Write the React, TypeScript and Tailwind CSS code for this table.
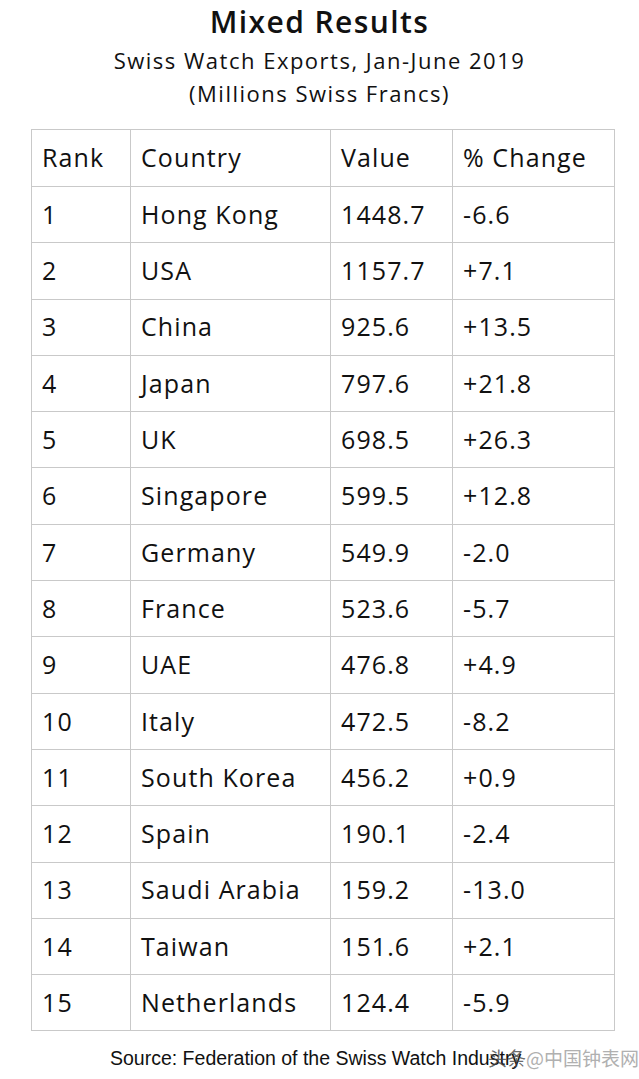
const rows: [number, string, string, string][] = [
  [1, "Hong Kong", "1448.7", "-6.6"],
  [2, "USA", "1157.7", "+7.1"],
  [3, "China", "925.6", "+13.5"],
  [4, "Japan", "797.6", "+21.8"],
  [5, "UK", "698.5", "+26.3"],
  [6, "Singapore", "599.5", "+12.8"],
  [7, "Germany", "549.9", "-2.0"],
  [8, "France", "523.6", "-5.7"],
  [9, "UAE", "476.8", "+4.9"],
  [10, "Italy", "472.5", "-8.2"],
  [11, "South Korea", "456.2", "+0.9"],
  [12, "Spain", "190.1", "-2.4"],
  [13, "Saudi Arabia", "159.2", "-13.0"],
  [14, "Taiwan", "151.6", "+2.1"],
  [15, "Netherlands", "124.4", "-5.9"],
];

export default function App() {
  const cell = "border border-[#c9c9c9] pl-[10px] text-left font-normal";

  return (
    <div className="relative h-[1079px] w-[639px] overflow-hidden bg-white font-['Open_Sans',sans-serif] text-[#111]">
      <div className="flex flex-col items-center pt-[1px]">
        <h1 className="text-[30px] font-semibold leading-[42px] tracking-[1.4px]">Mixed Results</h1>
        <p className="text-[22px] leading-[34px] tracking-[1.5px]">Swiss Watch Exports, Jan-June 2019</p>
        <p className="text-[22px] leading-[32px] tracking-[1.5px]">(Millions Swiss Francs)</p>
      </div>

      <table className="ml-[31px] mt-[20px] w-[583px] table-fixed border-collapse text-[25px] tracking-[1.1px]">
        <colgroup>
          <col className="w-[99px]" />
          <col className="w-[200px]" />
          <col className="w-[122px]" />
          <col className="w-[162px]" />
        </colgroup>
        <thead>
          <tr className="h-[57px]">
            <th className={cell}>Rank</th>
            <th className={cell}>Country</th>
            <th className={cell}>Value</th>
            <th className={cell}>% Change</th>
          </tr>
        </thead>
        <tbody>
          {rows.map(([rank, country, value, change]) => (
            <tr key={rank} className="h-[56.3px]">
              <td className={cell}>{rank}</td>
              <td className={cell}>{country}</td>
              <td className={cell}>{value}</td>
              <td className={cell}>{change}</td>
            </tr>
          ))}
        </tbody>
      </table>

      <div className="relative mt-[14px] pl-[110px]">
        <p className="whitespace-nowrap font-['Liberation_Sans',sans-serif] text-[19.5px] leading-[26px] text-[#111]">
          Source: Federation of the Swiss Watch Industry
        </p>
        {/* watermark */}
        <div className="absolute left-[488px] top-[1px] flex items-center whitespace-nowrap font-['Noto_Sans_CJK_SC',sans-serif] text-[19px] leading-[24px]">
          <span className="text-[#444]/80">头条</span>
          <span className="text-[#b0b0b0]">@中国钟表网</span>
        </div>
      </div>
    </div>
  );
}
